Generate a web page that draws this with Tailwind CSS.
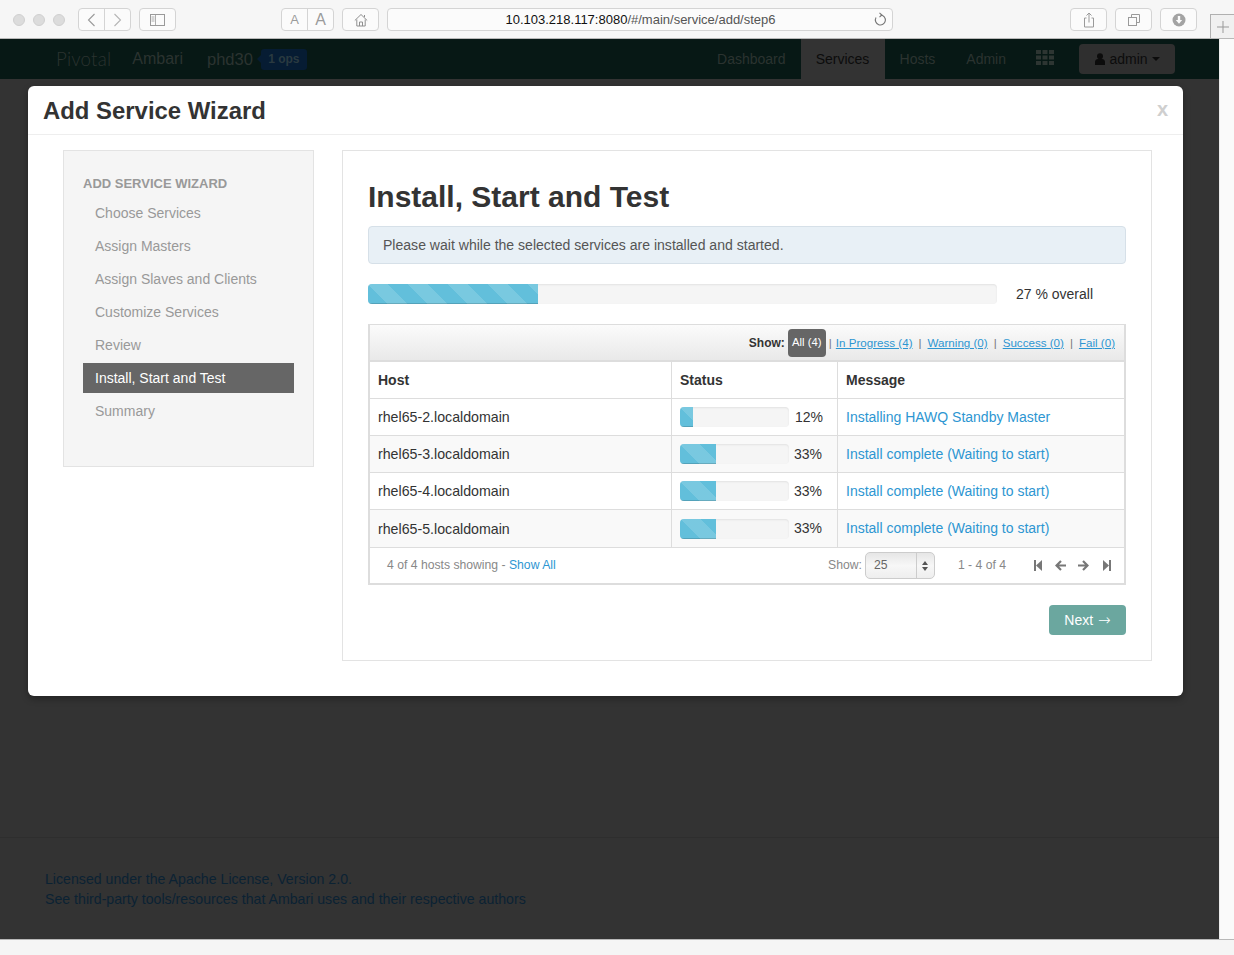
<!DOCTYPE html>
<html>
<head>
<meta charset="utf-8">
<script src="https://cdn.jsdelivr.net/npm/@tailwindcss/browser@4"></script>
</head>
<body class="m-0 overflow-hidden bg-white">
<div class="relative w-[1234px] h-[955px] overflow-hidden flex flex-col font-['Liberation_Sans',Arial,sans-serif] text-[14px] text-[#333]">

  <!-- browser chrome -->
  <div class="h-[39px] shrink-0 bg-[#f6f6f6] border-b border-[#b8b8b8] flex items-start pt-[8px] pl-[13px] relative">
    <div class="flex gap-[8px] mt-[6px]"><span class="w-[12px] h-[12px] rounded-full bg-[#dcdcdc] border border-[#d0d0d0]"></span><span class="w-[12px] h-[12px] rounded-full bg-[#dcdcdc] border border-[#d0d0d0]"></span><span class="w-[12px] h-[12px] rounded-full bg-[#dcdcdc] border border-[#d0d0d0]"></span></div>
    <div class="ml-[13px] flex h-[23px] w-[53px] border border-[#d4d4d4] rounded-[4px] bg-[#fbfbfb]">
      <span class="flex-1 flex items-center justify-center border-r border-[#d4d4d4]"><svg width="9" height="14" viewBox="0 0 9 14" fill="none" stroke="#9a9a9a" stroke-width="1.1"><path d="M7.5 1L1.5 7l6 6"/></svg></span>
      <span class="flex-1 flex items-center justify-center"><svg width="9" height="14" viewBox="0 0 9 14" fill="none" stroke="#b5b5b5" stroke-width="1.1"><path d="M1.500 1l6 6-6 6"/></svg></span>
    </div>
    <div class="ml-[8px] flex h-[23px] w-[37px] border border-[#d4d4d4] rounded-[4px] bg-[#fbfbfb] items-center justify-center"><svg width="15" height="12" viewBox="0 0 15 12" fill="none" stroke="#9a9a9a"><rect x=".5" y=".5" width="14" height="11"/><path d="M5.500 .5v11M1.500 3h3M1.500 5h3M1.500 7h3" stroke-width=".8"/></svg></div>
    <div class="ml-[105px] flex h-[23px] w-[53px] border border-[#d4d4d4] rounded-[4px] bg-[#fbfbfb] text-[#9b9b9b]">
      <span class="flex-1 flex items-center justify-center border-r border-[#d4d4d4] text-[13px]">A</span>
      <span class="flex-1 flex items-center justify-center text-[16px]">A</span>
    </div>
    <div class="ml-[8px] flex h-[23px] w-[37px] border border-[#d4d4d4] rounded-[4px] bg-[#fbfbfb] items-center justify-center"><svg width="14" height="14" viewBox="0 0 14 14" fill="none" stroke="#8f8f8f"><path d="M.8 7.500L7 1.500l6.200 6M2.800 6.500v6.500h8.400V6.500M5.500 13V9h3v4M10.500 4V2"/></svg></div>
    <div class="ml-[8px] relative h-[23px] w-[506px] border border-[#d4d4d4] rounded-[4px] bg-[#fbfbfb] flex items-center justify-center text-[13px] text-[#555]">
      <span class="ml-[1px]"><span class="text-[#111]">10.103.218.117:8080</span>/#/main/service/add/step6</span>
      <svg class="absolute right-[5px] top-[3px]" width="14" height="15" viewBox="0 0 14 15" fill="none" stroke="#777" stroke-width="1.1"><path d="M7.500 3a5 5 0 1 1-4.500 2.600"/><path d="M6.500 .8l2.400 2.200-2.400 2.200"/></svg>
    </div>
    <div class="ml-[177px] flex h-[23px] w-[37px] border border-[#d4d4d4] rounded-[4px] bg-[#fbfbfb] items-center justify-center"><svg width="12" height="16" viewBox="0 0 12 16" fill="none" stroke="#9a9a9a"><path d="M3.500 6H1.500v9h9V6H8.500M6 10.500V1M3.500 3.500L6 1l2.500 2.500"/></svg></div>
    <div class="ml-[8px] flex h-[23px] w-[37px] border border-[#d4d4d4] rounded-[4px] bg-[#fbfbfb] items-center justify-center"><svg width="12" height="12" viewBox="0 0 12 12" fill="none" stroke="#9a9a9a"><rect x=".5" y="3.500" width="8" height="8"/><path d="M3.500 3.500V.5h8v8H8.500"/></svg></div>
    <div class="ml-[8px] flex h-[23px] w-[37px] border border-[#d4d4d4] rounded-[4px] bg-[#fbfbfb] items-center justify-center"><svg width="14" height="14" viewBox="0 0 14 14"><circle cx="7" cy="7" r="6.500" fill="#a3a3a3"/><path d="M5.800 3h2.400v4h2L7 10.800 3.800 7h2z" fill="#fbfbfb"/></svg></div>
    <div class="absolute right-0 top-[14px] w-[24px] h-[24px] border border-[#b0b0b0] border-b-0 border-r-0 bg-[#f0f0f0] flex items-center justify-center"><svg width="12" height="12" viewBox="0 0 12 12" stroke="#999"><path d="M6 0v12M0 6h12"/></svg></div>
  </div>

  <!-- page + scrollbar -->
  <div class="flex-1 flex min-h-0">
    <div class="w-[1219px] flex flex-col bg-[#333333]">
      <!-- navbar -->
      <div class="h-[40px] shrink-0 bg-[#071815] flex items-center text-[16px] text-[#2b3330]">
        <span class="ml-[56px] text-[18.700px] tracking-[0.2px] font-['Lato',sans-serif] font-light">Pivotal</span>
        <span class="ml-[21px]">Ambari</span>
        <span class="ml-[24px] text-[16.500px]">phd30</span>
        <span class="relative ml-[8px] h-[21px] w-[46px] rounded-[3px] bg-[#061c33] flex items-center justify-center text-[12px] font-bold text-[#2a3a40]">1 ops<i class="absolute left-[-4px] top-[6px] w-0 h-0 border-y-[4px] border-y-transparent border-r-[4px] border-r-[#061c33]"></i></span>
        <div class="ml-auto flex items-center h-full text-[14px]">
          <span class="mr-[15px]">Dashboard</span>
          <span class="h-full w-[84px] bg-[#333] text-[#0c0c0c] flex items-center justify-center">Services</span>
          <span class="ml-[15px]">Hosts</span>
          <span class="ml-[31px]">Admin</span>
          <svg class="ml-[30px] mb-[4px]" width="18" height="15" viewBox="0 0 18 15" fill="#2d3532"><rect width="5" height="4"/><rect x="6.500" width="5" height="4"/><rect x="13" width="5" height="4"/><rect y="5.500" width="5" height="4"/><rect x="6.500" y="5.500" width="5" height="4"/><rect x="13" y="5.500" width="5" height="4"/><rect y="11" width="5" height="4"/><rect x="6.500" y="11" width="5" height="4"/><rect x="13" y="11" width="5" height="4"/></svg>
          <span class="ml-[25px] mr-[44px] h-[30px] w-[96px] rounded-[4px] bg-[#2f2f2f] text-[#0c0c0c] flex items-center justify-center gap-[3px]">
            <svg width="12" height="12" viewBox="0 0 12 12" fill="#0c0c0c"><circle cx="6" cy="3.200" r="3"/><path d="M1 12V9c0-2 1.500-3 3-3h4c1.500 0 3 1 3 3v3z"/></svg>admin<span class="ml-[1px] w-0 h-0 border-x-[4px] border-x-transparent border-t-[4px] border-t-[#0c0c0c]"></span>
          </span>
        </div>
      </div>
      <div class="flex-1"></div>
      <!-- footer -->
      <div class="h-[102px] shrink-0 border-t border-[#2e2e2e] pl-[45px] pt-[31px] text-[14.170px] leading-[20px] text-[#0b2233]">
        <div>Licensed under the Apache License, Version 2.0.</div>
        <div>See third-party tools/resources that Ambari uses and their respective authors</div>
      </div>
    </div>
    <div class="w-[15px] bg-[#fafafa] border-l border-[#ececec]"></div>
  </div>

  <div class="h-[16px] shrink-0 bg-[#f5f5f5] border-t border-[#b8b8b8]"></div>

  <!-- modal -->
  <div class="absolute left-[28px] top-[86px] w-[1155px] h-[610px] bg-white rounded-[6px] shadow-[0_3px_7px_rgba(0,0,0,0.3)] flex flex-col">
    <div class="h-[49px] shrink-0 border-b border-[#eeeeee] flex items-center justify-between pl-[15px] pr-[15px]">
      <span class="text-[23.900px] font-bold text-[#333] mt-[2px]">Add Service Wizard</span>
      <span class="text-[20px] font-bold text-[#cfcfcf] mt-[-2px]">x</span>
    </div>
    <div class="flex items-start pl-[35px] pt-[15px]">
      <!-- sidebar -->
      <div class="w-[251px] h-[317px] bg-[#f5f5f5] border border-[#e3e3e3] pl-[19px] pr-[19px] pt-[25px]">
        <div class="text-[13px] font-bold text-[#999] leading-[16px] mb-[6px]">ADD SERVICE WIZARD</div>
        <div class="flex flex-col gap-[3px] text-[#999] text-[14px]">
          <div class="h-[30px] pl-[12px] flex items-center">Choose Services</div>
          <div class="h-[30px] pl-[12px] flex items-center">Assign Masters</div>
          <div class="h-[30px] pl-[12px] flex items-center">Assign Slaves and Clients</div>
          <div class="h-[30px] pl-[12px] flex items-center">Customize Services</div>
          <div class="h-[30px] pl-[12px] flex items-center">Review</div>
          <div class="h-[30px] pl-[12px] flex items-center bg-[#666666] text-white">Install, Start and Test</div>
          <div class="h-[30px] pl-[12px] flex items-center">Summary</div>
        </div>
      </div>
      <!-- main -->
      <div class="ml-[28px] w-[810px] h-[511px] border border-[#e3e3e3] pl-[25px] pr-[25px]">
        <h2 class="text-[30px] font-bold text-[#333] leading-[36px] mt-[28px]">Install, Start and Test</h2>
        <div class="mt-[11px] h-[38px] rounded-[4px] bg-[#e8f0f6] border border-[#d6e0e8] pl-[14px] pt-[1px] flex items-center text-[14.050px] text-[#555]">Please wait while the selected services are installed and started.</div>
        <div class="mt-[20px] h-[20px] flex items-start">
          <div class="w-[629px] h-[20px] rounded-[4px] bg-[#f5f5f5] shadow-[inset_0_1px_2px_rgba(0,0,0,0.08)] overflow-hidden">
            <div class="h-full w-[170px] bg-[#62bfdb] shadow-[inset_0_-1px_0_rgba(0,0,0,0.15)] bg-[linear-gradient(45deg,rgba(255,255,255,.15)_25%,transparent_25%,transparent_50%,rgba(255,255,255,.15)_50%,rgba(255,255,255,.15)_75%,transparent_75%,transparent)] bg-[length:40px_40px]"></div>
          </div>
          <span class="ml-[19px] leading-[21px]">27 % overall</span>
        </div>
        <!-- table box -->
        <div class="mt-[20px] h-[261px] border-2 border-[#dddddd] border-t-[1px] flex flex-col">
          <div class="h-[37px] shrink-0 bg-linear-to-b from-[#fbfbfb] to-[#e9e9e9] border-b-2 border-[#dddddd] flex items-center justify-end pr-[9px] text-[11.600px] text-[#555]">
            <b class="text-[#333] text-[12px] mr-[3px]">Show:</b>
            <span class="h-[28px] w-[38px] rounded-[4px] bg-[#666666] text-white flex items-center justify-center text-[11.300px]">All (4)</span>
            <span class="ml-[3px] mr-[4px] text-[#777]">|</span><a class="text-[#2d96d2] underline">In Progress (4)</a>
            <span class="mx-[6px] text-[#777]">|</span><a class="text-[#2d96d2] underline">Warning (0)</a>
            <span class="mx-[6px] text-[#777]">|</span><a class="text-[#2d96d2] underline">Success (0)</a>
            <span class="mx-[6px] text-[#777]">|</span><a class="text-[#2d96d2] underline">Fail (0)</a>
          </div>
          <div class="grid grid-cols-[302px_166px_1fr] auto-rows-[37px] text-[14px] border-b-2 border-[#dddddd] h-[186px]">
            <div class="border-r border-b border-[#dddddd] pl-[8px] flex items-center font-bold">Host</div>
            <div class="border-r border-b border-[#dddddd] pl-[8px] flex items-center font-bold">Status</div>
            <div class="border-b border-[#dddddd] pl-[8px] flex items-center font-bold">Message</div>

            <div class="border-r border-b border-[#dddddd] pl-[8px] pt-[2px] flex items-center text-[14.200px]">rhel65-2.localdomain</div>
            <div class="border-r border-b border-[#dddddd] pl-[8px] flex items-center">
              <div class="w-[109px] h-[20px] rounded-[4px] bg-[#f5f5f5] shadow-[inset_0_1px_2px_rgba(0,0,0,0.08)] overflow-hidden"><div class="h-full w-[13px] bg-[#62bfdb] shadow-[inset_0_-1px_0_rgba(0,0,0,0.15)] bg-[linear-gradient(45deg,rgba(255,255,255,.15)_25%,transparent_25%,transparent_50%,rgba(255,255,255,.15)_50%,rgba(255,255,255,.15)_75%,transparent_75%,transparent)] bg-[length:40px_40px]"></div></div><span class="ml-[6px]">12%</span>
            </div>
            <div class="border-b border-[#dddddd] pl-[8px] flex items-center text-[#2d96d2]">Installing HAWQ Standby Master</div>

            <div class="bg-[#f9f9f9] border-r border-b border-[#dddddd] pl-[8px] pt-[2px] flex items-center text-[14.200px]">rhel65-3.localdomain</div>
            <div class="bg-[#f9f9f9] border-r border-b border-[#dddddd] pl-[8px] flex items-center">
              <div class="w-[109px] h-[20px] rounded-[4px] bg-[#f5f5f5] shadow-[inset_0_1px_2px_rgba(0,0,0,0.08)] overflow-hidden"><div class="h-full w-[36px] bg-[#62bfdb] shadow-[inset_0_-1px_0_rgba(0,0,0,0.15)] bg-[linear-gradient(45deg,rgba(255,255,255,.15)_25%,transparent_25%,transparent_50%,rgba(255,255,255,.15)_50%,rgba(255,255,255,.15)_75%,transparent_75%,transparent)] bg-[length:40px_40px]"></div></div><span class="ml-[5px]">33%</span>
            </div>
            <div class="bg-[#f9f9f9] border-b border-[#dddddd] pl-[8px] flex items-center text-[#2d96d2]">Install complete (Waiting to start)</div>

            <div class="border-r border-b border-[#dddddd] pl-[8px] pt-[2px] flex items-center text-[14.200px]">rhel65-4.localdomain</div>
            <div class="border-r border-b border-[#dddddd] pl-[8px] flex items-center">
              <div class="w-[109px] h-[20px] rounded-[4px] bg-[#f5f5f5] shadow-[inset_0_1px_2px_rgba(0,0,0,0.08)] overflow-hidden"><div class="h-full w-[36px] bg-[#62bfdb] shadow-[inset_0_-1px_0_rgba(0,0,0,0.15)] bg-[linear-gradient(45deg,rgba(255,255,255,.15)_25%,transparent_25%,transparent_50%,rgba(255,255,255,.15)_50%,rgba(255,255,255,.15)_75%,transparent_75%,transparent)] bg-[length:40px_40px]"></div></div><span class="ml-[5px]">33%</span>
            </div>
            <div class="border-b border-[#dddddd] pl-[8px] flex items-center text-[#2d96d2]">Install complete (Waiting to start)</div>

            <div class="bg-[#f9f9f9] border-r border-[#dddddd] pl-[8px] pt-[2px] flex items-center text-[14.200px]">rhel65-5.localdomain</div>
            <div class="bg-[#f9f9f9] border-r border-[#dddddd] pl-[8px] flex items-center">
              <div class="w-[109px] h-[20px] rounded-[4px] bg-[#f5f5f5] shadow-[inset_0_1px_2px_rgba(0,0,0,0.08)] overflow-hidden"><div class="h-full w-[36px] bg-[#62bfdb] shadow-[inset_0_-1px_0_rgba(0,0,0,0.15)] bg-[linear-gradient(45deg,rgba(255,255,255,.15)_25%,transparent_25%,transparent_50%,rgba(255,255,255,.15)_50%,rgba(255,255,255,.15)_75%,transparent_75%,transparent)] bg-[length:40px_40px]"></div></div><span class="ml-[5px]">33%</span>
            </div>
            <div class="bg-[#f9f9f9] pl-[8px] flex items-center text-[#2d96d2]">Install complete (Waiting to start)</div>
          </div>
          <div class="flex-1 flex items-center text-[12.200px] text-[#888] pl-[17px]">
            <span>4 of 4 hosts showing - <a class="text-[#2d96d2]">Show All</a></span>
            <span class="ml-auto">Show:</span>
            <div class="ml-[3px] w-[70px] h-[27px] rounded-[5px] border border-[#cccccc] bg-linear-to-b from-[#e6e6e6] via-[#f7f7f7] to-[#eeeeee] flex items-center text-[#666] pl-[8px]">
              <span>25</span>
              <span class="ml-auto h-full w-[18px] border-l border-[#cccccc] flex flex-col items-center justify-center gap-[2px]"><i class="w-0 h-0 border-x-[3px] border-x-transparent border-b-[4px] border-b-[#555]"></i><i class="w-0 h-0 border-x-[3px] border-x-transparent border-t-[4px] border-t-[#555]"></i></span>
            </div>
            <span class="ml-[23px]">1 - 4 of 4</span>
            <div class="ml-[28px] mr-[13px] flex items-center text-[#777]">
              <svg width="8" height="11" viewBox="0 0 8 11" fill="#777"><rect width="2" height="11"/><path d="M8 0v11L2 5.500z"/></svg>
              <svg class="ml-[13px]" width="11" height="11" viewBox="0 0 11 11" fill="none" stroke="#777" stroke-width="2.200"><path d="M6 1L1.500 5.500 6 10M2 5.500h9"/></svg>
              <svg class="ml-[12px]" width="11" height="11" viewBox="0 0 11 11" fill="none" stroke="#777" stroke-width="2.200"><path d="M5 1l4.500 4.500L5 10M9 5.500H0"/></svg>
              <svg class="ml-[14px]" width="8" height="11" viewBox="0 0 8 11" fill="#777"><rect x="6" width="2" height="11"/><path d="M0 0v11l6-5.500z"/></svg>
            </div>
          </div>
        </div>
        <div class="mt-[20px] flex justify-end">
          <span class="h-[30px] w-[77px] rounded-[4px] bg-[#6ba79f] text-white flex items-center justify-center gap-[5px]">Next <span class="font-['DejaVu_Sans',sans-serif] text-[15px] font-extralight">→</span></span>
        </div>
      </div>
    </div>
  </div>
</div>
</body>
</html>
